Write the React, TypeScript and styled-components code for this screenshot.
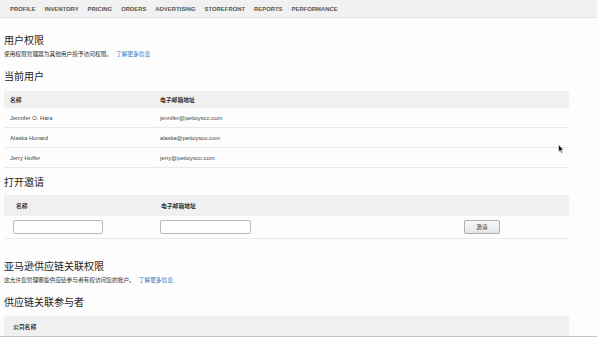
import styled, { createGlobalStyle } from "styled-components";

const GlobalStyle = createGlobalStyle`
  html, body {
    margin: 0;
    padding: 0;
    background: #fdfdfd;
  }
  body {
    font-family: "Liberation Sans", Arial, "Noto Sans CJK SC", sans-serif;
    color: #444;
  }
`;

const Page = styled.div`
  width: 597px;
  height: 337px;
  overflow: hidden;
  position: relative;
`;

const Nav = styled.div`
  height: 17px;
  background: #f1f1f1;
  border-bottom: 1px solid #e4e4e4;
  display: flex;
  align-items: center;
  gap: 9px;
  padding-left: 10px;
`;

const NavItem = styled.span`
  font-size: 5.9px;
  font-weight: bold;
  color: #555;
  text-transform: uppercase;
`;

const Content = styled.div`
  padding: 0 28px 0 4px;
`;

const Heading = styled.h2<{ $top: number }>`
  margin: ${(p) => p.$top}px 0 0;
  font-size: 10px;
  line-height: 14px;
  font-weight: normal;
  color: #222;
  font-family: "Liberation Sans", "Noto Sans CJK SC", sans-serif;
`;

const Desc = styled.p`
  margin: 2px 0 0;
  font-size: 5.7px;
  line-height: 8px;
  color: #333;
  font-family: "Liberation Sans", "Noto Sans CJK SC", sans-serif;
`;

const Link = styled.a`
  color: #1a6fbf;
  text-decoration: none;
  margin-left: 4px;
`;

const Table = styled.div<{ $top: number; $cols: string }>`
  margin-top: ${(p) => p.$top}px;
  display: grid;
  grid-template-columns: ${(p) => p.$cols};
`;

const HeadCell = styled.div<{ $pad: number; $h: number }>`
  background: #f0f0f0;
  height: ${(p) => p.$h}px;
  padding-left: ${(p) => p.$pad}px;
  display: flex;
  align-items: center;
  font-size: 5.8px;
  font-weight: bold;
  color: #333;
  font-family: "Liberation Sans", "Noto Sans CJK SC", sans-serif;
`;

const Cell = styled.div<{ $pad: number; $h: number }>`
  height: ${(p) => p.$h}px;
  padding-left: ${(p) => p.$pad}px;
  border-bottom: 1px solid #e9e9e9;
  display: flex;
  align-items: center;
  font-size: 5.8px;
  color: #444;
`;

const Input = styled.input<{ $w: number }>`
  width: ${(p) => p.$w}px;
  height: 14px;
  box-sizing: border-box;
  border: 1px solid #b9b9b9;
  border-radius: 2px;
  background: #fff;
  padding: 0;
  margin: 0;
`;

const Button = styled.button`
  width: 36px;
  height: 14px;
  box-sizing: border-box;
  border: 1px solid #adadad;
  border-radius: 2px;
  background: linear-gradient(#f8f8f8, #e6e6e6);
  font-size: 5.5px;
  color: #333;
  padding: 0;
  font-family: "Liberation Sans", "Noto Sans CJK SC", sans-serif;
`;

const BottomRule = styled.div`
  border-top: 1px solid #c4c4c4;
`;

const Cursor = styled.svg`
  position: absolute;
  left: 558px;
  top: 144px;
`;

const navItems = [
  "Profile",
  "Inventory",
  "Pricing",
  "Orders",
  "Advertising",
  "Storefront",
  "Reports",
  "Performance",
];

const users = [
  { name: "Jennifer O. Hara", email: "jennifer@pettoysco.com" },
  { name: "Alaska Honard", email: "alaska@pettoysco.com" },
  { name: "Jerry Hoffer", email: "jerry@pettoysco.com" },
];

const App = () => {
  return (
    <Page>
      <GlobalStyle />
      <Nav>
        {navItems.map((n) => (
          <NavItem key={n}>{n}</NavItem>
        ))}
      </Nav>
      <Content>
        <Heading $top={16}>用户权限</Heading>
        <Desc>
          使用权限管理器为其他用户授予访问权限。
          <Link href="#">了解更多信息</Link>
        </Desc>

        <Heading $top={12}>当前用户</Heading>
        <Table $top={7} $cols="156px 1fr">
          <HeadCell $pad={6} $h={17}>名称</HeadCell>
          <HeadCell $pad={0} $h={17}>电子邮箱地址</HeadCell>
          {users.map((u) => (
            <>
              <Cell key={u.name} $pad={6} $h={19}>
                {u.name}
              </Cell>
              <Cell key={u.email} $pad={0} $h={19}>
                {u.email}
              </Cell>
            </>
          ))}
        </Table>

        <Heading $top={8}>打开邀请</Heading>
        <Table $top={5} $cols="156px 304px 1fr">
          <HeadCell $pad={12} $h={21}>名称</HeadCell>
          <HeadCell $pad={1} $h={21}>电子邮箱地址</HeadCell>
          <HeadCell $pad={0} $h={21} />
          <Cell $pad={9} $h={22}>
            <Input $w={90} />
          </Cell>
          <Cell $pad={0} $h={22}>
            <Input $w={91} />
          </Cell>
          <Cell $pad={0} $h={22}>
            <Button>邀请</Button>
          </Cell>
        </Table>

        <Heading $top={21}>亚马逊供应链关联权限</Heading>
        <Desc>
          这允许您管理哪些供应链参与者有权访问您的账户。
          <Link href="#">了解更多信息</Link>
        </Desc>

        <Heading $top={12}>供应链关联参与者</Heading>
        <Table $top={6} $cols="1fr">
          <HeadCell $pad={9} $h={20}>公司名称</HeadCell>
        </Table>
      </Content>
      <BottomRule />
      <Cursor width="6" height="10" viewBox="0 0 6 10">
        <path d="M0.5 0.5 L0.5 8 L2.2 6.4 L3.4 9.2 L4.5 8.7 L3.4 6 L5.5 6 Z" fill="#111" stroke="#fff" strokeWidth="0.6" />
      </Cursor>
    </Page>
  );
};

export default App;
